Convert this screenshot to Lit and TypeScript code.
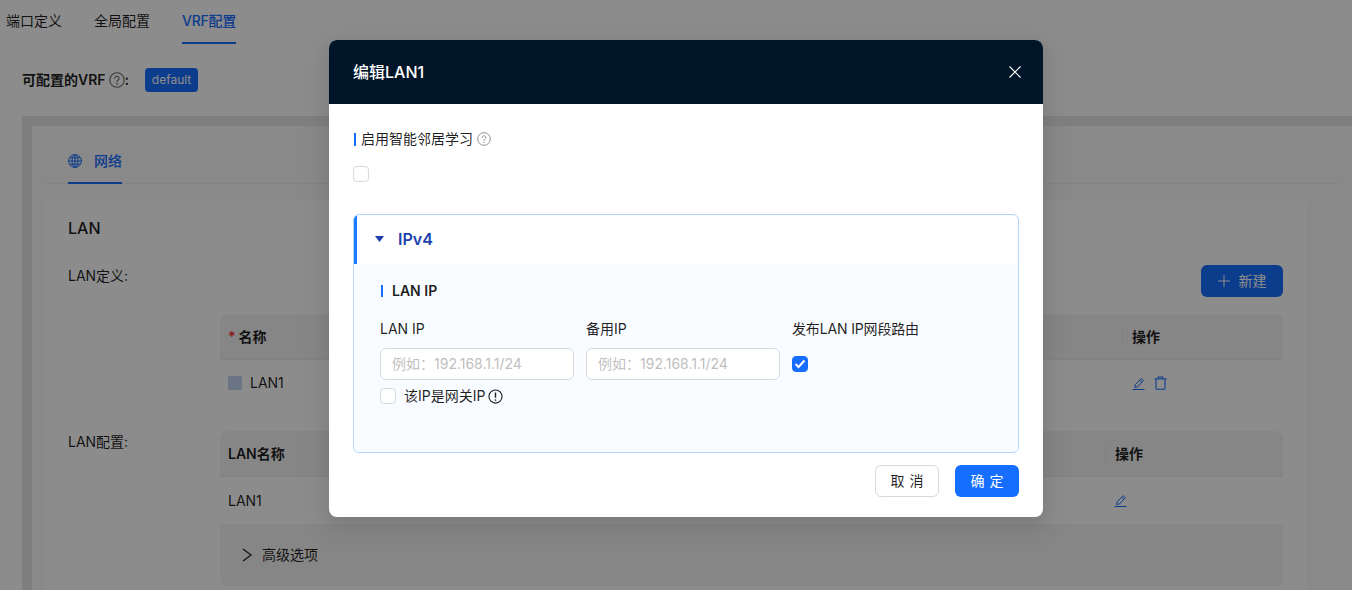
import { LitElement, html, css, svg } from "lit";
import { customElement } from "lit/decorators.js";

const help = (size: number) => svg`<svg class="ic" width=${size} height=${size} viewBox="0 0 16 16" fill="none" stroke="currentColor" stroke-width="1.1"><circle cx="8" cy="8" r="7.2"/><path d="M5.9 6.3a2.1 2.1 0 1 1 3.2 1.8c-.7.4-1.1.8-1.1 1.6" stroke-linecap="round"/><circle cx="8" cy="11.9" r=".8" fill="currentColor" stroke="none"/></svg>`;
const warn = svg`<svg class="ic" width="15" height="15" viewBox="0 0 16 16" fill="none" stroke="currentColor" stroke-width="1.2"><circle cx="8" cy="8" r="7"/><path d="M8 3.8v5.6" stroke-width="1.5"/><circle cx="8" cy="11.7" r=".9" fill="currentColor" stroke="none"/></svg>`;
const edit = svg`<svg width="13" height="13" viewBox="0 0 13 13" fill="none" stroke="currentColor" stroke-width="1"><path d="M.5 12.5h12" /><path d="M2.8 10.4l.4-2.6L8.6 2.1a.9.9 0 0 1 1.3 0l.9.9a.9.9 0 0 1 0 1.3L5.4 10z" stroke-linejoin="round"/><path d="M7.6 3.2l2.2 2.2"/></svg>`;
const trash = svg`<svg width="13" height="14" viewBox="0 0 13 14" fill="none" stroke="currentColor" stroke-width="1.1"><path d="M.5 2.9h12"/><path d="M4.2 2.7V1h4.6v1.7"/><path d="M2 3v9.2c0 .7.4 1.1 1.1 1.1h6.8c.7 0 1.1-.4 1.1-1.1V3"/></svg>`;
const globe = svg`<svg width="14" height="14" viewBox="0 0 14 14" fill="none" stroke="currentColor" stroke-width="1"><circle cx="7" cy="7" r="6.4"/><ellipse cx="7" cy="7" rx="3" ry="6.4"/><path d="M7 .6v12.8M.6 7h12.8M1.5 3.8h11M1.5 10.2h11"/></svg>`;

@customElement("app-root")
export class AppRoot extends LitElement {
  static styles = css`
    :host { display: block; width: 1352px; height: 590px; overflow: hidden; position: relative; background: #fff;
      font-family: Inter, "Noto Sans CJK SC", sans-serif; font-size: 14px; line-height: 22px; color: rgba(0,0,0,.88); }
    * { box-sizing: border-box; }
    .ic { flex: none; }
    .tabs { display: flex; gap: 32px; height: 44px; padding-left: 6px; }
    .tab { height: 44px; padding-top: 10px; }
    .tab.on { color: #166eff; font-weight: 500; border-bottom: 2px solid #166eff; letter-spacing: -0.02em; }
    .vrf { display: flex; align-items: center; height: 24px; margin: 24px 0 24px 22px; font-weight: 600; }
    .vrf .ic { margin: 0 0 0 3px; color: #6b6b6b; font-weight: 400; }
    .tag { margin-left: 16px; width: 53px; height: 24px; background: #166eff; color: #fff; border-radius: 4px; font-size: 12px; font-weight: 400; text-align: center; line-height: 24px; }
    .outer { margin-left: 22px; background: #e8e8e8; padding: 10px 0 0 10px; height: 474px; }
    .inner { background: #fafafa; height: 100%; padding: 0 12px; }
    .ntabs { height: 58px; padding: 25px 0 0 24px; border-bottom: 1px solid #efefef; display: flex; }
    .ntab { display: flex; align-items: center; gap: 12px; height: 33px; color: #166eff; font-weight: 500; border-bottom: 2px solid #166eff; padding-bottom: 11px; }
    .sec { margin-top: 16px; width: 1263px; background: #fff; border-radius: 8px; padding: 17px 24px 0; height: 400px; }
    .sec h3 { margin: 0; font-size: 16px; font-weight: 500; line-height: 22px; }
    .row { display: flex; }
    .lbl { width: 152px; flex: none; }
    .r1 { margin-top: 26px; }
    .col { flex: 1; }
    .btnrow { display: flex; justify-content: flex-end; }
    .new { width: 82px; height: 32px; background: #166eff; color: #fff; border-radius: 6px; display: flex; align-items: center; justify-content: center; gap: 9px; }
    .tb { margin-top: 17px; }
    .th { height: 46px; background: #f5f5f5; border-bottom: 1px solid #ebebeb; border-radius: 8px 8px 0 0; display: flex; align-items: center; font-weight: 600; padding-left: 8px; }
    .th .star { color: #ff2d2d; margin-right: 3px; }
    .th .op { margin-left: auto; display: flex; align-items: center; }
    .th .div { width: 1px; height: 22px; background: #ebebeb; margin-right: 9px; }
    .op1 { width: 161px; }
    .op2 { width: 178px; }
    .td { height: 46px; display: flex; align-items: center; padding-left: 8px; }
    .td.t2 { height: 47px; }
    .sw { width: 14px; height: 14px; background: #c4d4f0; margin-right: 8px; }
    .td .acts { margin-left: auto; display: flex; gap: 9px; color: #166eff; align-items: center; }
    .a1 { width: 151px; }
    .a2 { width: 169px; }
    .r2 { margin-top: 25px; }
    .adv { height: 62px; background: #f5f5f5; border-radius: 0 0 8px 8px; display: flex; align-items: center; padding-left: 22px; gap: 10px; }
    .mask { position: absolute; inset: 0; background: rgba(0,0,0,.45); }
    .modal { position: absolute; left: 329px; top: 40px; width: 714px; height: 477px; background: #fff; border-radius: 8px; overflow: hidden;
      display: flex; flex-direction: column; box-shadow: 0 6px 16px rgba(0,0,0,.08), 0 9px 28px 8px rgba(0,0,0,.05); }
    .mh { height: 64px; flex: none; background: #001628; color: #fff; font-size: 16px; font-weight: 500; display: flex; align-items: center; justify-content: space-between; padding: 0 22px 0 24px; }
    .mb { padding: 24px 24px 0; }
    .lab { display: flex; align-items: center; height: 22px; line-height: 22px; }
    .bar { width: 2px; height: 13px; background: #166eff; margin: 0 5px 0 1px; }
    .lab .ic { margin-left: 4px; color: #8c8c8c; }
    .cb { width: 16px; height: 16px; border: 1px solid #d9d9d9; border-radius: 4px; background: #fff; flex: none; display: block; }
    .cb.on { background: #166eff; border-color: #166eff; display: flex; align-items: center; justify-content: center; }
    .c1 { margin-top: 16px; }
    .coll { margin-top: 32px; height: 239px; border: 1px solid #b3d4ff; border-radius: 6px; overflow: hidden; }
    .ch { height: 49px; display: flex; align-items: center; padding: 0 0 1px 18px; border-left: 3px solid #1a7bff; color: #1d3fae; font-size: 16px; font-weight: 600; gap: 14px; }
    .cc { background: #f8fbff; height: 188px; padding: 16px 26px; }
    .sub { display: flex; align-items: center; font-weight: 600; height: 22px; }
    .sub .bar { margin: 0 9px 0 1px; height: 12px; }
    .fields { display: grid; grid-template-columns: repeat(3, 194px); column-gap: 12px; margin-top: 16px; }
    .f label { display: block; height: 22px; }
    .f label.tight { letter-spacing: -.15px; }
    .inp { margin-top: 8px; height: 32px; border: 1px solid #d9d9d9; border-radius: 6px; background: #fff; color: #bfbfbf; padding: 0 11px; line-height: 30px; white-space: nowrap; overflow: hidden; }
    .gw { display: flex; align-items: center; margin-top: 8px; height: 16px; gap: 8px; }
    .gw span { display: flex; align-items: center; gap: 3px; }
    .pub { margin-top: 16px; }
    .mf { display: flex; justify-content: flex-end; gap: 16px; padding: 12px 24px 0; }
    .b { width: 64px; height: 32px; border-radius: 6px; display: flex; align-items: center; justify-content: center; word-spacing: 1px; }
    .b.c { border: 1px solid #d9d9d9; background: #fff; }
    .b.p { background: #166eff; color: #fff; }
  `;

  render() {
    return html`
      <div class="tabs">
        <div class="tab">端口定义</div><div class="tab">全局配置</div><div class="tab on">VRF配置</div>
      </div>
      <div class="vrf">可配置的VRF${help(16)}:<span class="tag">default</span></div>
      <div class="outer"><div class="inner">
        <div class="ntabs"><div class="ntab">${globe}网络</div></div>
        <div class="sec">
          <h3>LAN</h3>
          <div class="row r1">
            <div class="lbl">LAN定义:</div>
            <div class="col">
              <div class="btnrow"><div class="new"><svg width="12" height="12" viewBox="0 0 12 12" stroke="currentColor" fill="none"><path d="M6 0v12M0 6h12"/></svg>新建</div></div>
              <div class="tb">
                <div class="th"><span class="star">*</span>名称<div class="op op1"><div class="div"></div>操作</div></div>
                <div class="td"><span class="sw"></span>LAN1<div class="acts a1">${edit}${trash}</div></div>
              </div>
            </div>
          </div>
          <div class="row r2">
            <div class="lbl">LAN配置:</div>
            <div class="col">
              <div class="th">LAN名称<div class="op op2"><div class="div"></div>操作</div></div>
              <div class="td t2">LAN1<div class="acts a2">${edit}</div></div>
              <div class="adv"><svg width="10" height="14" viewBox="0 0 10 14" fill="none" stroke="currentColor" stroke-width="1.2"><path d="M1 1l8 6-8 6"/></svg>高级选项</div>
            </div>
          </div>
        </div>
      </div></div>
      <div class="mask"></div>
      <div class="modal">
        <div class="mh">编辑LAN1<svg width="12" height="12" viewBox="0 0 12 12" stroke="#fff" stroke-width="1.1" fill="none"><path d="M.5.5l11 11M11.5.5l-11 11"/></svg></div>
        <div class="mb">
          <div class="lab"><span class="bar"></span>启用智能邻居学习${help(14)}</div>
          <span class="cb c1"></span>
          <div class="coll">
            <div class="ch"><svg width="9" height="6" viewBox="0 0 9 6" fill="currentColor"><path d="M0 0h9L4.5 6z"/></svg>IPv4</div>
            <div class="cc">
              <div class="sub"><span class="bar"></span>LAN IP</div>
              <div class="fields">
                <div class="f"><label>LAN IP</label><div class="inp">例如&#xFF1A;192.168.1.1/24</div>
                  <div class="gw"><i class="cb"></i><span>该IP是网关IP${warn}</span></div></div>
                <div class="f"><label>备用IP</label><div class="inp">例如&#xFF1A;192.168.1.1/24</div></div>
                <div class="f"><label class="tight">发布LAN IP网段路由</label>
                  <div class="cb on pub"><svg width="12" height="10" viewBox="0 0 12 10" fill="none" stroke="#fff" stroke-width="2"><path d="M1.5 5l3 3 6-6.5"/></svg></div></div>
              </div>
            </div>
          </div>
        </div>
        <div class="mf"><div class="b c">取 消</div><div class="b p">确 定</div></div>
      </div>
    `;
  }
}
